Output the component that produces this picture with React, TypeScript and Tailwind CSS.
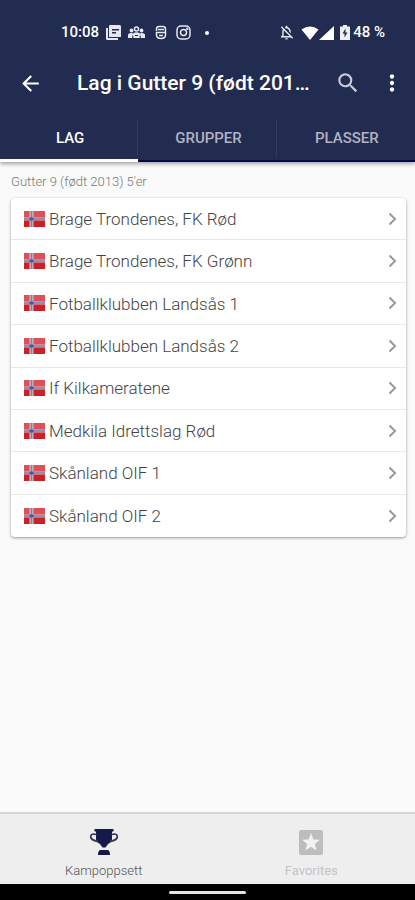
import React, { useState } from 'react';
import { MdArrowBack, MdMoreVert, MdSearch, MdOutlineNotificationsOff } from 'react-icons/md';

const tabs = ['LAG', 'GRUPPER', 'PLASSER'];

const teams = [
  'Brage Trondenes, FK Rød',
  'Brage Trondenes, FK Grønn',
  'Fotballklubben Landsås 1',
  'Fotballklubben Landsås 2',
  'If Kilkameratene',
  'Medkila Idrettslag Rød',
  'Skånland OIF 1',
  'Skånland OIF 2',
];

const NorwayFlag: React.FC = () => (
  <svg width="21" height="16" viewBox="0 0 21 16" className="shrink-0" aria-hidden="true">
    <rect width="21" height="8" fill="#dc5157" />
    <rect y="8" width="21" height="8" fill="#cb2026" />
    <path d="M5.500 0h4v16h-4zM0 6.500h21v3H0z" fill="#d9b9c8" />
    <path d="M6.700 0h1.600v16H6.700zM0 7.300h21v1.400H0z" fill="#7a80ae" />
    <path d="M5.500 6.500h4v3h-4z" fill="#4a5796" />
  </svg>
);

const StatusBar: React.FC = () => (
  <div className="flex h-[50px] items-center justify-between pt-[15px] pr-[30px] pl-[61px] text-[15px] font-medium">
    <div className="flex items-center">
      <span className="w-[38px] whitespace-nowrap">10:08</span>
      <div className="ml-[7px] flex items-center gap-[7px]">
        <svg width="15" height="15" viewBox="0 0 15 15" fill="#e6e8f0">
          <path d="M0 3h2v10h10v2H1.500Q0 15 0 13.500z" />
          <path fillRule="evenodd" d="M4 0h9.500Q15 0 15 1.500V12H3V1Q3 0 4 0zM6 4v1.400h7V4zM6 7v1.400h4V7z" />
        </svg>
        <svg width="17" height="13" viewBox="0 0 17 13" fill="#e6e8f0">
          <circle cx="8.500" cy="3" r="2" fill="none" stroke="#e6e8f0" strokeWidth="1.500" />
          <circle cx="3.500" cy="4.500" r="1.900" />
          <circle cx="13.500" cy="4.500" r="1.900" />
          <path d="M0 12V9Q0 7 3.500 7L5 7.500Q8.500 5 12 7.500l1.500-.5q3.500 0 3.500 2v3z" />
          <path d="M4.800 12V9.500M12.200 12V9.500M7 9.500h3" stroke="#222b50" />
        </svg>
        <svg width="12" height="15" viewBox="0 0 12 15" fill="none" stroke="#e6e8f0" strokeWidth="1.500" className="ml-[3px]">
          <path d="M1.500 6V4Q1.500 1.500 4 1.500h4q2.500 0 2.500 2.500v6q0 3.500-4.500 3.500T1.500 10V7.500h9M3 4.500h6M4 10.500h4" />
        </svg>
        <svg width="15" height="15" viewBox="0 0 15 15" fill="none" stroke="#e6e8f0" strokeWidth="1.500" className="ml-[2px]">
          <rect x="1" y="1" width="13" height="13" rx="4" />
          <circle cx="7.500" cy="7.500" r="3" />
          <circle cx="11.300" cy="3.700" r=".5" />
        </svg>
        <span className="ml-[7px] size-1 rounded-full bg-white" />
      </div>
    </div>
    <div className="flex items-center">
      <MdOutlineNotificationsOff size={17} color="#e6e8f0" />
      <svg width="18" height="14" viewBox="0 0 18 14" fill="#fff" className="ml-[6px]">
        <path d="M9 14 .5 3.500Q9-2.500 17.500 3.500z" />
      </svg>
      <svg width="15" height="14" viewBox="0 0 15 14" fill="#fff">
        <path d="M15 0v14H0z" />
      </svg>
      <svg width="10" height="15" viewBox="0 0 10 15" className="ml-[6px]">
        <path d="M3 0h4v1.500h3V15H0V1.500h3z" fill="#eef0f6" />
        <path d="M5.500 3.500 2.500 8.500h2v4l3-5h-2z" fill="#222b50" />
      </svg>
      <span className="ml-[3px] whitespace-nowrap">48 %</span>
    </div>
  </div>
);

const App: React.FC = () => {
  const [active, setActive] = useState('LAG');

  return (
    <div className="flex min-h-screen flex-col bg-[#fafafa] font-[Roboto,sans-serif]">
      <header className="bg-[#222b50] text-white shadow-[0_2px_4px_rgba(0,0,0,0.35)]">
        <StatusBar />

        <div className="flex h-[66px] items-center pr-[10px] pl-[18px]">
          <button type="button" aria-label="Tilbake">
            <MdArrowBack size={25} />
          </button>
          <h1 className="ml-[34px] flex-1 pt-[2px] text-[21px] font-medium whitespace-nowrap">
            Lag i Gutter 9 (født 201…
          </h1>
          <button type="button" aria-label="Søk" className="text-[#c8cbd6]">
            <MdSearch size={26} />
          </button>
          <button type="button" aria-label="Meny" className="ml-[18px]">
            <MdMoreVert size={26} />
          </button>
        </div>

        <nav className="grid h-[46px] grid-cols-3 border-b-2 border-[#05094a]">
          {tabs.map((tab) => (
            <button
              key={tab}
              type="button"
              onClick={() => setActive(tab)}
              className={`relative pl-[2px] text-[15px] font-medium ${active === tab ? 'text-white' : 'text-[#b0b4c3]'}`}
            >
              {tab}
              {tab !== 'PLASSER' && <span className="absolute top-1 right-0 h-[36px] w-px bg-[#343c5e]" />}
              {active === tab && <span className="absolute inset-x-0 -bottom-[2px] h-[3px] bg-white" />}
            </button>
          ))}
        </nav>
      </header>

      <main className="flex-1 pt-[12px] pr-[9px] pb-4 pl-[11px]">
        <h2 className="text-[13px] leading-[16px] font-light text-[#777777]">Gutter 9 (født 2013) 5'er</h2>
        <ul className="mt-[8px] grid h-[339px] auto-rows-fr rounded-sm bg-white shadow-[0_1px_3px_rgba(0,0,0,0.4)]">
          {teams.map((team) => (
            <li key={team} className="border-b border-[#e8e8e8] last:border-b-0">
              <a href="#" className="flex h-full items-center pr-[9px] pl-[13px] text-[#444444]">
                <NorwayFlag />
                <span className="ml-[4px] flex-1 truncate pt-[2px] text-[17px] font-light">{team}</span>
                <svg width="9" height="14" viewBox="0 0 9 14" fill="none" stroke="#999" strokeWidth="2">
                  <path d="M1.500 1.500 7 7l-5.500 5.500" />
                </svg>
              </a>
            </li>
          ))}
        </ul>
      </main>

      <footer>
        <nav className="grid h-[72px] grid-cols-2 border-t-2 border-[#d5d5d5] bg-[#eeeeee] text-[13px]">
          <a href="#" className="flex flex-col items-center pt-[14px] font-light text-[#555555]">
            <svg width="30" height="30" viewBox="0 0 30 30">
              <path d="M5.500 1h19v2.500h-1.500V11q0 3-4 5l-2.500 3.500h-3L11 16q-4-2-4-5V3.500H5.500z" fill="#161a4b" />
              <path d="M7.500 6.500Q2 5 1.700 8.500T9 13.500M22.500 6.500Q28 5 28.300 8.500T21 13.500" fill="none" stroke="#343b5c" strokeWidth="1.800" />
              <path d="M11 22h8q2 1 2 5H9q0-4 2-5z" fill="#161a4b" />
            </svg>
            <span className="mt-[5px] leading-[16px]">Kampoppsett</span>
          </a>
          <a href="#" className="flex flex-col items-center pt-[14px] text-[#c4c4c4]">
            <svg width="30" height="30" viewBox="0 0 30 30">
              <rect x="3" y="2" width="24" height="25" rx="2.500" fill="#bcbebd" />
              <path d="m15 5 2.400 6.500 6.600.2-5.200 4.200 1.800 6.600-5.600-3.800-5.600 3.800 1.800-6.600L6 11.700l6.600-.2z" fill="#f2f2f2" />
            </svg>
            <span className="mt-[5px] leading-[16px]">Favorites</span>
          </a>
        </nav>
        <div className="flex h-4 items-center justify-center bg-black">
          <span className="h-[3px] w-[77px] rounded-full bg-[#e4e4e4]" />
        </div>
      </footer>
    </div>
  );
};

export default App;
